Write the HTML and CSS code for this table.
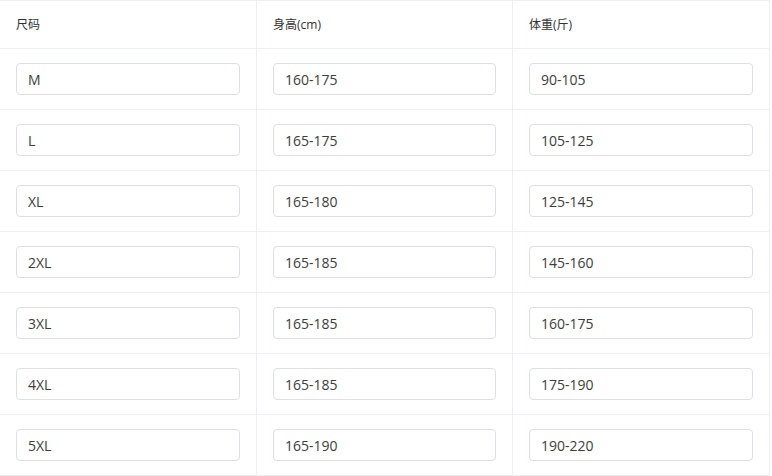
FILE: index.html
```html
<!DOCTYPE html>
<html lang="zh-CN">
<head>
<meta charset="utf-8">
<title>尺码表</title>
<link rel="stylesheet" href="styles.css">
</head>
<body>
<div class="table">
  <div class="row head">
    <div class="cell">尺码</div>
    <div class="cell">身高(cm)</div>
    <div class="cell">体重(斤)</div>
  </div>
  <div class="row">
    <div class="cell"><input class="inp" value="M"></div>
    <div class="cell"><input class="inp" value="160-175"></div>
    <div class="cell"><input class="inp" value="90-105"></div>
  </div>
  <div class="row">
    <div class="cell"><input class="inp" value="L"></div>
    <div class="cell"><input class="inp" value="165-175"></div>
    <div class="cell"><input class="inp" value="105-125"></div>
  </div>
  <div class="row">
    <div class="cell"><input class="inp" value="XL"></div>
    <div class="cell"><input class="inp" value="165-180"></div>
    <div class="cell"><input class="inp" value="125-145"></div>
  </div>
  <div class="row">
    <div class="cell"><input class="inp" value="2XL"></div>
    <div class="cell"><input class="inp" value="165-185"></div>
    <div class="cell"><input class="inp" value="145-160"></div>
  </div>
  <div class="row">
    <div class="cell"><input class="inp" value="3XL"></div>
    <div class="cell"><input class="inp" value="165-185"></div>
    <div class="cell"><input class="inp" value="160-175"></div>
  </div>
  <div class="row">
    <div class="cell"><input class="inp" value="4XL"></div>
    <div class="cell"><input class="inp" value="165-185"></div>
    <div class="cell"><input class="inp" value="175-190"></div>
  </div>
  <div class="row">
    <div class="cell"><input class="inp" value="5XL"></div>
    <div class="cell"><input class="inp" value="165-190"></div>
    <div class="cell"><input class="inp" value="190-220"></div>
  </div>
</div>
</body>
</html>
```
FILE: styles.css
```css
html, body {
  margin: 0;
  padding: 0;
  background: #fff;
}
body {
  font-family: "Open Sans", "Noto Sans CJK SC", sans-serif;
  color: #333;
}
.table {
  width: 770px;
  border-top: 1px solid #ebeef5;
}
.row {
  display: grid;
  grid-template-columns: 257px 256px 257px;
  border-bottom: 1px solid #ebeef5;
  height: 61px;
  box-sizing: border-box;
}
.row.head {
  height: 48px;
}
.cell {
  box-sizing: border-box;
  border-right: 1px solid #ebeef5;
  padding: 0 16px;
  display: flex;
  align-items: center;
}
.head .cell {
  font-size: 12px;
  color: #303030;
  padding-bottom: 1px;
}
.inp {
  box-sizing: border-box;
  width: 224px;
  height: 32px;
  margin: 0;
  border: 1px solid #dcdfe6;
  border-radius: 4px;
  padding: 0 11px;
  font-family: "Open Sans", "Noto Sans CJK SC", sans-serif;
  font-size: 14px;
  color: #3c3c3c;
  background: #fff;
  outline: none;
}
```
